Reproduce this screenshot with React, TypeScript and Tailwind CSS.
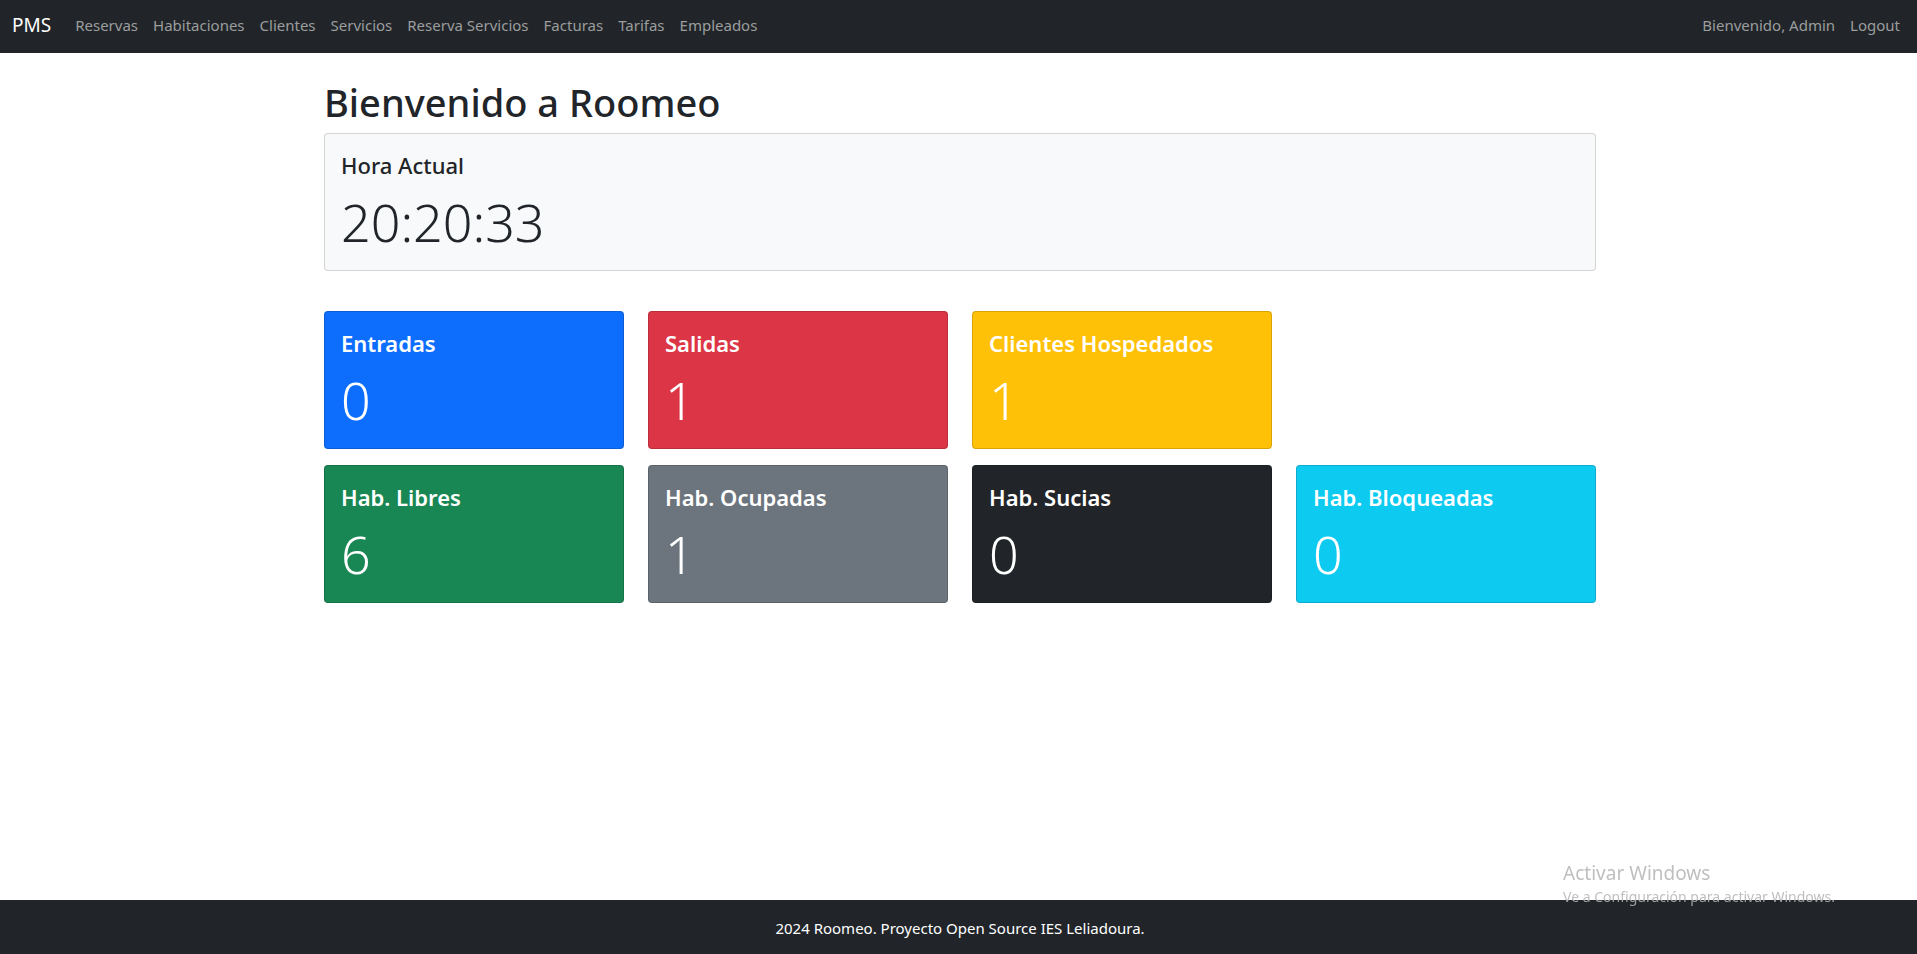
import React from "react";

const links = [
  "Reservas",
  "Habitaciones",
  "Clientes",
  "Servicios",
  "Reserva Servicios",
  "Facturas",
  "Tarifas",
  "Empleados",
];

interface Stat {
  title: string;
  value: string;
  color: string;
}

const guests: Stat[] = [
  { title: "Entradas", value: "0", color: "bg-[#0d6efd] text-white" },
  { title: "Salidas", value: "1", color: "bg-[#dc3545] text-white" },
  { title: "Clientes Hospedados", value: "1", color: "bg-[#ffc107] text-white" },
];

const rooms: Stat[] = [
  { title: "Hab. Libres", value: "6", color: "bg-[#198754] text-white" },
  { title: "Hab. Ocupadas", value: "1", color: "bg-[#6c757d] text-white" },
  { title: "Hab. Sucias", value: "0", color: "bg-[#212529] text-white" },
  { title: "Hab. Bloqueadas", value: "0", color: "bg-[#0dcaf0] text-white" },
];

function Card({ title, value, color, medium }: Stat & { medium?: boolean }) {
  return (
    <section className={`rounded border border-black/15 p-4 ${color}`}>
      <h2 className={`mb-1.5 text-[22px] leading-[30px] ${medium ? "font-medium" : "font-semibold"}`}>{title}</h2>
      <p className="pt-1 text-[52px] leading-16 font-light">{value}</p>
    </section>
  );
}

function StatRow({ stats }: { stats: Stat[] }) {
  return (
    <div className="mb-4 grid grid-cols-1 gap-x-6 gap-y-4 sm:grid-cols-2 lg:grid-cols-4">
      {stats.map((s) => (
        <Card key={s.title} {...s} />
      ))}
    </div>
  );
}

export default function App() {
  return (
    <div className="flex min-h-screen flex-col bg-white font-['Noto_Sans',sans-serif] text-[#212529]">
      <header className="bg-[#212529]">
        <nav className="flex min-h-[53px] flex-wrap items-center px-3 pb-1 text-[15px] leading-6 text-[#9b9d9e]">
          <a href="#" className="mr-6 text-[19px] text-white">
            PMS
          </a>
          <ul className="flex flex-wrap gap-x-[15px]">
            {links.map((l) => (
              <li key={l}>
                <a href="#">{l}</a>
              </li>
            ))}
          </ul>
          <ul className="ml-auto flex gap-x-[15px] pr-[5px]">
            <li>Bienvenido, Admin</li>
            <li>
              <a href="#">Logout</a>
            </li>
          </ul>
        </nav>
      </header>

      <main className="mx-auto w-full max-w-[1323px] grow pt-6 pr-6 pl-[27px]">
        <h1 className="mb-1.5 text-[38px] leading-[50px] font-medium">Bienvenido a Roomeo</h1>
        <div className="mb-10">
          <Card title="Hora Actual" value="20:20:33" color="bg-[#f8f9fa]" medium />
        </div>
        <StatRow stats={guests} />
        <StatRow stats={rooms} />
      </main>

      <footer className="bg-[#212529] pt-4 pb-3.5 pl-[3px] text-center text-[15px] leading-6 text-white">
        <p>2024 Roomeo. Proyecto Open Source IES Leliadoura.</p>
      </footer>

      <aside className="pointer-events-none fixed right-[82px] bottom-[47px] text-[#b4b4b4]/85">
        <p className="text-[19px] leading-7">Activar Windows</p>
        <p className="text-sm leading-5">Ve a Configuración para activar Windows.</p>
      </aside>
    </div>
  );
}
